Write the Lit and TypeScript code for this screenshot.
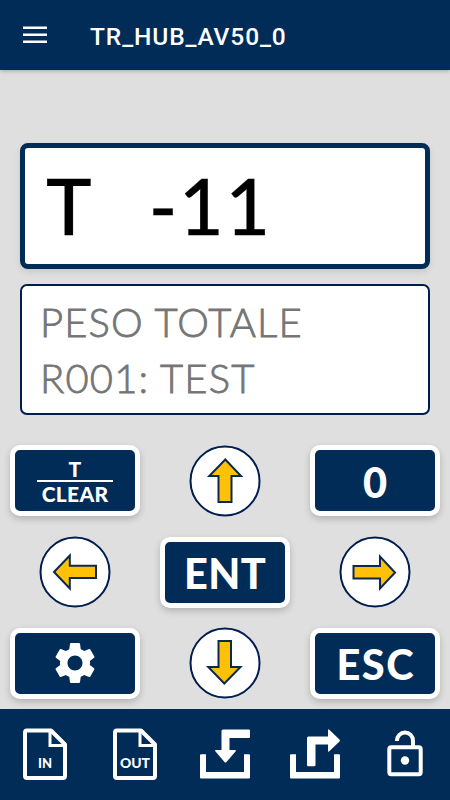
import { LitElement, html, svg, css } from "lit";
import { customElement, property } from "lit/decorators.js";

@customElement("arrow-key")
class ArrowKey extends LitElement {
  @property() dir = "up";
  static styles = css`
    :host { display: flex; justify-content: center; align-items: center; }
    svg { display: block; }
    .disc { fill: #fff; stroke: #001d4f; stroke-width: 2; }
    .arrow { fill: #ffc107; stroke: #0b2850; stroke-width: 2; }
  `;
  render() {
    const paths: Record<string, string> = {
      up: "M36.3 14.5L52 31H42.5V57H29.5V31H20.3Z",
      down: "M35.3 56.5L19.3 40H29.5V14H42V40H51.5Z",
      left: "M15 36L30.8 19.5V29.7H57V42H30.8V52.5Z",
      right: "M56 36.5L41 52.5V42.5H14.5V30H41V20.5Z",
    };
    return html`<svg width="72" height="72" viewBox="0 0 72 72">
      <circle class="disc" cx="36" cy="36" r="34.5"></circle>
      <path class="arrow" d=${paths[this.dir]}></path>
    </svg>`;
  }
}

@customElement("pad-key")
class PadKey extends LitElement {
  static styles = css`
    :host {
      box-sizing: border-box; display: flex; flex-direction: column;
      align-items: center; justify-content: center; width: 130px; height: 71px;
      border: 5px solid #fff; border-radius: 10px; background: #002c57;
      color: #fff; box-shadow: 0 3px 7px rgba(0, 0, 0, 0.2);
    }
  `;
  render() { return html`<slot></slot>`; }
}

@customElement("app-root")
class AppRoot extends LitElement {
  static styles = css`
    :host {
      display: flex; flex-direction: column; width: 450px; height: 800px;
      background: #dfdfdf; font-family: Lato, "Liberation Sans", sans-serif; overflow: hidden;
    }
    header {
      display: flex; align-items: center; box-sizing: border-box; height: 70px;
      flex: none; padding: 0 23px; background: #002c57; color: #fff;
      box-shadow: 0 1px 4px rgba(0, 0, 0, 0.25);
    }
    .menu { display: block; margin-right: 43px; }
    .title { font: 500 24.5px/30px Roboto, sans-serif; letter-spacing: 0.9px; padding-top: 3px; }
    main { flex: 1; display: flex; flex-direction: column; padding-top: 73px; }
    .weight {
      box-sizing: border-box; display: flex; align-items: center; height: 126px; margin: 0 20px;
      padding: 0 0 2px 21px; border: 5px solid #002c57; border-radius: 8px; background: #fff;
      color: #000; font-size: 77px; line-height: 90px; font-weight: 500; white-space: pre;
      box-shadow: 0 3px 6px rgba(0, 0, 0, 0.1); -webkit-text-stroke: 0.3px #000;
    }
    .value { margin-left: 57px; letter-spacing: 1.7px; }
    .info {
      box-sizing: border-box; height: 131px; margin: 15px 20px 0; padding: 8px 0 0 18px;
      border: 2px solid #001d4f; border-radius: 7px; background: #fff; color: #757575;
      font-size: 40px; line-height: 56px; font-weight: 300; white-space: nowrap;
      -webkit-text-stroke: 0.8px #757575;
    }
    .line { height: 55.5px; }
    .l1 { letter-spacing: 1.1px; }
    .l2 { letter-spacing: 1.15px; }
    .pad {
      display: grid; grid-template-columns: repeat(3, 150px); grid-auto-rows: 71px;
      row-gap: 20.4px; justify-items: center; align-items: center; margin-top: 30.2px;
    }
    .big { font-weight: 900; font-size: 41.5px; line-height: 48px; padding-top: 2px; }
    .ent { letter-spacing: 0.4px; }
    .esc { letter-spacing: 1.5px; margin-right: -1.5px; }
    .small { font-weight: 900; font-size: 21px; line-height: 23px; letter-spacing: 0.3px; }
    .rule { width: 76px; height: 2px; background: #fff; }
    footer {
      flex: none; display: grid; grid-template-columns: repeat(5, 90px); height: 91px;
      background: #002c57;
    }
    footer svg { display: block; }
    .tag { font: 900 14px Lato, sans-serif; fill: #fff; }
  `;

  doc(label: string, width: number) {
    return html`<svg width="90" height="91" viewBox="0 0 90 91" fill="none">
      <path d="M27 21.5H51L65 35.5V67Q65 69 63 69H27Q25 69 25 67V23.5Q25 21.5 27 21.5Z" stroke="#fff" stroke-width="4" stroke-linejoin="round"/>
      <path d="M50 22V36.5H65" stroke="#fff" stroke-width="3"/>
      <text class="tag" x="45" y="59" text-anchor="middle" textLength=${width} lengthAdjust="spacingAndGlyphs">${label}</text>
    </svg>`;
  }

  tray(arrow: unknown) {
    return html`<svg width="90" height="91" viewBox="0 0 90 91" fill="#fff">
      <path d="M21 45.3H26V63H64V45.3H69Q70 45.3 70 46.3V68.5Q70 69.5 69 69.5H21Q20 69.5 20 68.5V46.3Q20 45.3 21 45.3Z"/>
      ${arrow}
    </svg>`;
  }

  render() {
    return html`
      <header>
        <svg class="menu" width="24" height="18" viewBox="0 0 24 18" fill="#fff">
          <path d="M0 .5H24V3H0ZM0 7.5H24V10H0ZM0 14.5H24V17H0Z"/>
        </svg>
        <div class="title">TR_HUB_AV50_0</div>
      </header>
      <main>
        <div class="weight"><span>T</span><span class="value">-11</span></div>
        <div class="info">
          <div class="line l1">PESO TOTALE</div>
          <div class="line l2">R001: TEST</div>
        </div>
        <div class="pad">
          <pad-key>
            <span class="small">T</span><span class="rule"></span><span class="small">CLEAR</span>
          </pad-key>
          <arrow-key dir="up"></arrow-key>
          <pad-key><span class="big">0</span></pad-key>
          <arrow-key dir="left"></arrow-key>
          <pad-key><span class="big ent">ENT</span></pad-key>
          <arrow-key dir="right"></arrow-key>
          <pad-key>
            <svg width="50" height="50" viewBox="0 0 24 24" fill="#fff">
              <path d="M19.14 12.94c.04-.3.06-.61.06-.94 0-.32-.02-.64-.07-.94l2.03-1.58c.18-.14.23-.41.12-.61l-1.92-3.32c-.12-.22-.37-.29-.59-.22l-2.39.96c-.5-.38-1.03-.7-1.62-.94l-.36-2.54c-.04-.24-.24-.41-.48-.41h-3.84c-.24 0-.43.17-.47.41l-.36 2.54c-.59.24-1.13.57-1.62.94l-2.39-.96c-.22-.08-.47 0-.59.22L2.74 8.87c-.12.21-.08.47.12.61l2.03 1.58c-.05.3-.09.63-.09.94s.02.64.07.94l-2.03 1.58c-.18.14-.23.41-.12.61l1.92 3.32c.12.22.37.29.59.22l2.39-.96c.5.38 1.03.7 1.62.94l.36 2.54c.05.24.24.41.48.41h3.84c.24 0 .44-.17.47-.41l.36-2.54c.59-.24 1.13-.56 1.62-.94l2.39.96c.22.08.47 0 .59-.22l1.92-3.32c.12-.22.07-.47-.12-.61l-2.01-1.58zM12 15.6c-1.98 0-3.6-1.62-3.6-3.6s1.62-3.6 3.6-3.6 3.6 1.62 3.6 3.6-1.62 3.6-3.6 3.6z"/>
            </svg>
          </pad-key>
          <arrow-key dir="down"></arrow-key>
          <pad-key><span class="big esc">ESC</span></pad-key>
        </div>
      </main>
      <footer>
        ${this.doc("IN", 14)}
        ${this.doc("OUT", 30)}
        ${this.tray(svg`<path d="M43 20.5H69Q70 20.5 70 21.5V28Q70 29 69 29H49.5V41H55Q57 41 55.5 42.5L46.5 53Q45.5 54 44.5 53L35.5 42.5Q34 41 36 41H41.5V22Q41.5 20.5 43 20.5Z"/>`)}
        ${this.tray(svg`<path d="M38.5 27.5H58V21.5Q58 19.5 59.5 21L69.5 30.5Q70.3 31.5 69.5 32.5L59.5 42Q58 43.3 58 42V35.5H45.5V56Q45.5 57.3 44 57.3H38.5Q37 57.3 37 56V29Q37 27.5 38.5 27.5Z"/>`)}
        <svg width="90" height="91" viewBox="0 0 90 91" fill="none">
          <rect x="29.3" y="38.2" width="31.4" height="27" rx="2" stroke="#fff" stroke-width="4"/>
          <path d="M37 32V31.5A8 8 0 0 1 53 31.5V38" stroke="#fff" stroke-width="4"/>
          <circle cx="45" cy="51.5" r="4.2" fill="#fff"/>
        </svg>
      </footer>
    `;
  }
}
